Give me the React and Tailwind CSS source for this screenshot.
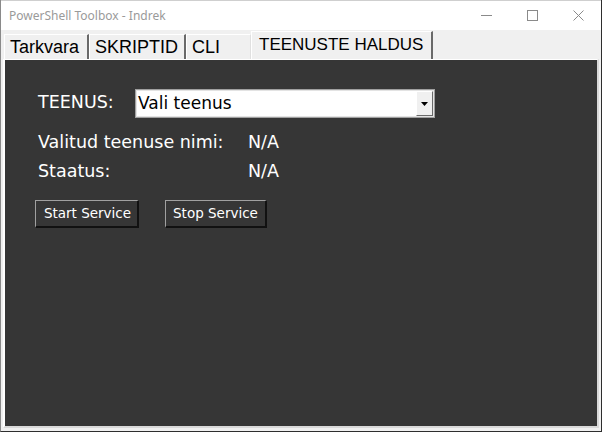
import React from "react";

export default function App() {
  const ui = { fontFamily: '"DejaVu Sans", Verdana, sans-serif' };
  const tabFont = { fontFamily: '"Liberation Sans", Arial, sans-serif' };
  return (
    <div className="w-[602px] h-[432px] flex flex-col bg-[#f0f0f0] border-l border-[#8a8a8a] border-r border-r-[#2e2e2e] border-b border-b-[#2e2e2e] overflow-hidden">
      {/* Title bar */}
      <div className="h-[30px] bg-white flex items-center shrink-0 border-t border-[#cfcfcf]">
        <div
          className="pl-[8px] text-[12px] text-[#9a9a9a] flex-1"
          style={{ fontFamily: '"Noto Sans", "Open Sans", sans-serif' }}
        >
          PowerShell Toolbox - Indrek
        </div>
        <div className="flex h-full">
          <div className="w-[46px] h-full flex items-center justify-center">
            <svg width="11" height="11" viewBox="0 0 11 11">
              <line x1="0" y1="5.5" x2="11" y2="5.5" stroke="#8a8a8a" strokeWidth="1" />
            </svg>
          </div>
          <div className="w-[46px] h-full flex items-center justify-center">
            <svg width="11" height="11" viewBox="0 0 11 11">
              <rect x="0.5" y="0.5" width="10" height="10" fill="none" stroke="#8a8a8a" strokeWidth="1" />
            </svg>
          </div>
          <div className="w-[46px] h-full flex items-center justify-center">
            <svg width="11" height="11" viewBox="0 0 11 11">
              <path d="M0.5 0.5 L10.5 10.5 M10.5 0.5 L0.5 10.5" stroke="#8a8a8a" strokeWidth="1" />
            </svg>
          </div>
        </div>
      </div>

      {/* Tab strip */}
      <div className="h-[29px] shrink-0 flex items-end pl-[3px]" style={tabFont}>
        <div className="w-[85px] h-[25px] flex items-center pl-[5px] text-[18px] text-black border-t border-l border-white border-r-2 border-r-[#696969] leading-none">
          Tarkvara
        </div>
        <div className="w-[97px] h-[25px] flex items-center pl-[5px] text-[18px] text-black border-t border-l border-white border-r-2 border-r-[#696969] leading-none">
          SKRIPTID
        </div>
        <div className="w-[65px] h-[25px] flex items-center pl-[5px] text-[18px] text-black border-t border-l border-white border-r border-r-[#e0e0e0] leading-none">
          CLI
        </div>
        <div className="w-[182px] h-[28px] flex items-center pl-[7px] pb-[2px] text-[17px] text-black border-t border-l border-white border-r-2 border-r-[#696969] leading-none">
          TEENUSTE HALDUS
        </div>
      </div>

      {/* Panel */}
      <div className="flex-1 ml-[2px] mr-[2px] mb-[3px] border-l-2 border-t border-white border-r-2 border-b-2 border-r-[#d9d9d9] border-b-[#d9d9d9]">
        <div className="w-full h-full bg-[#363636] pt-[29px] pl-[33px] text-white" style={ui}>
          {/* Row 1 */}
          <div className="flex items-center h-[29px]">
            <div className="w-[97px] text-[17.5px] -mt-[2px]">TEENUS:</div>
            <div className="w-[300px] h-[29px] bg-white border border-[#a0a0a0] flex items-center relative">
              <div className="absolute inset-0 border border-[#e3e3e3] pointer-events-none" />
              <span className="pl-[2px] text-[17px] text-black flex-1 leading-none">Vali teenus</span>
              <div className="w-[17px] h-[25px] mr-[1px] bg-[#f0f0f0] border-t border-l border-white border-r border-b border-r-[#6a6a6a] border-b-[#6a6a6a] flex items-center justify-center relative z-10">
                <svg width="7" height="4" viewBox="0 0 7 4">
                  <path d="M0 0 H7 L3.5 4 Z" fill="#000" />
                </svg>
              </div>
            </div>
          </div>
          {/* Row 2 */}
          <div className="flex items-center h-[20px] mt-[14px] text-[17.5px]">
            <div className="w-[210px]">Valitud teenuse nimi:</div>
            <div>N/A</div>
          </div>
          {/* Row 3 */}
          <div className="flex items-center h-[20px] mt-[9px] text-[17.5px]">
            <div className="w-[210px]">Staatus:</div>
            <div>N/A</div>
          </div>
          {/* Buttons */}
          <div className="flex mt-[19px] -ml-[3px] gap-[26px]">
            <button
              className="w-[104px] h-[28px] pl-[2px] bg-[#363636] text-white text-[13.5px] border-t border-l border-[#a0a0a0] border-r-2 border-b-2 border-r-[#111] border-b-[#111] flex items-center justify-center"
              style={ui}
            >
              Start Service
            </button>
            <button
              className="w-[102px] h-[28px] bg-[#363636] text-white text-[13.5px] border-t border-l border-[#a0a0a0] border-r-2 border-b-2 border-r-[#111] border-b-[#111] flex items-center justify-center"
              style={ui}
            >
              Stop Service
            </button>
          </div>
        </div>
      </div>
    </div>
  );
}
